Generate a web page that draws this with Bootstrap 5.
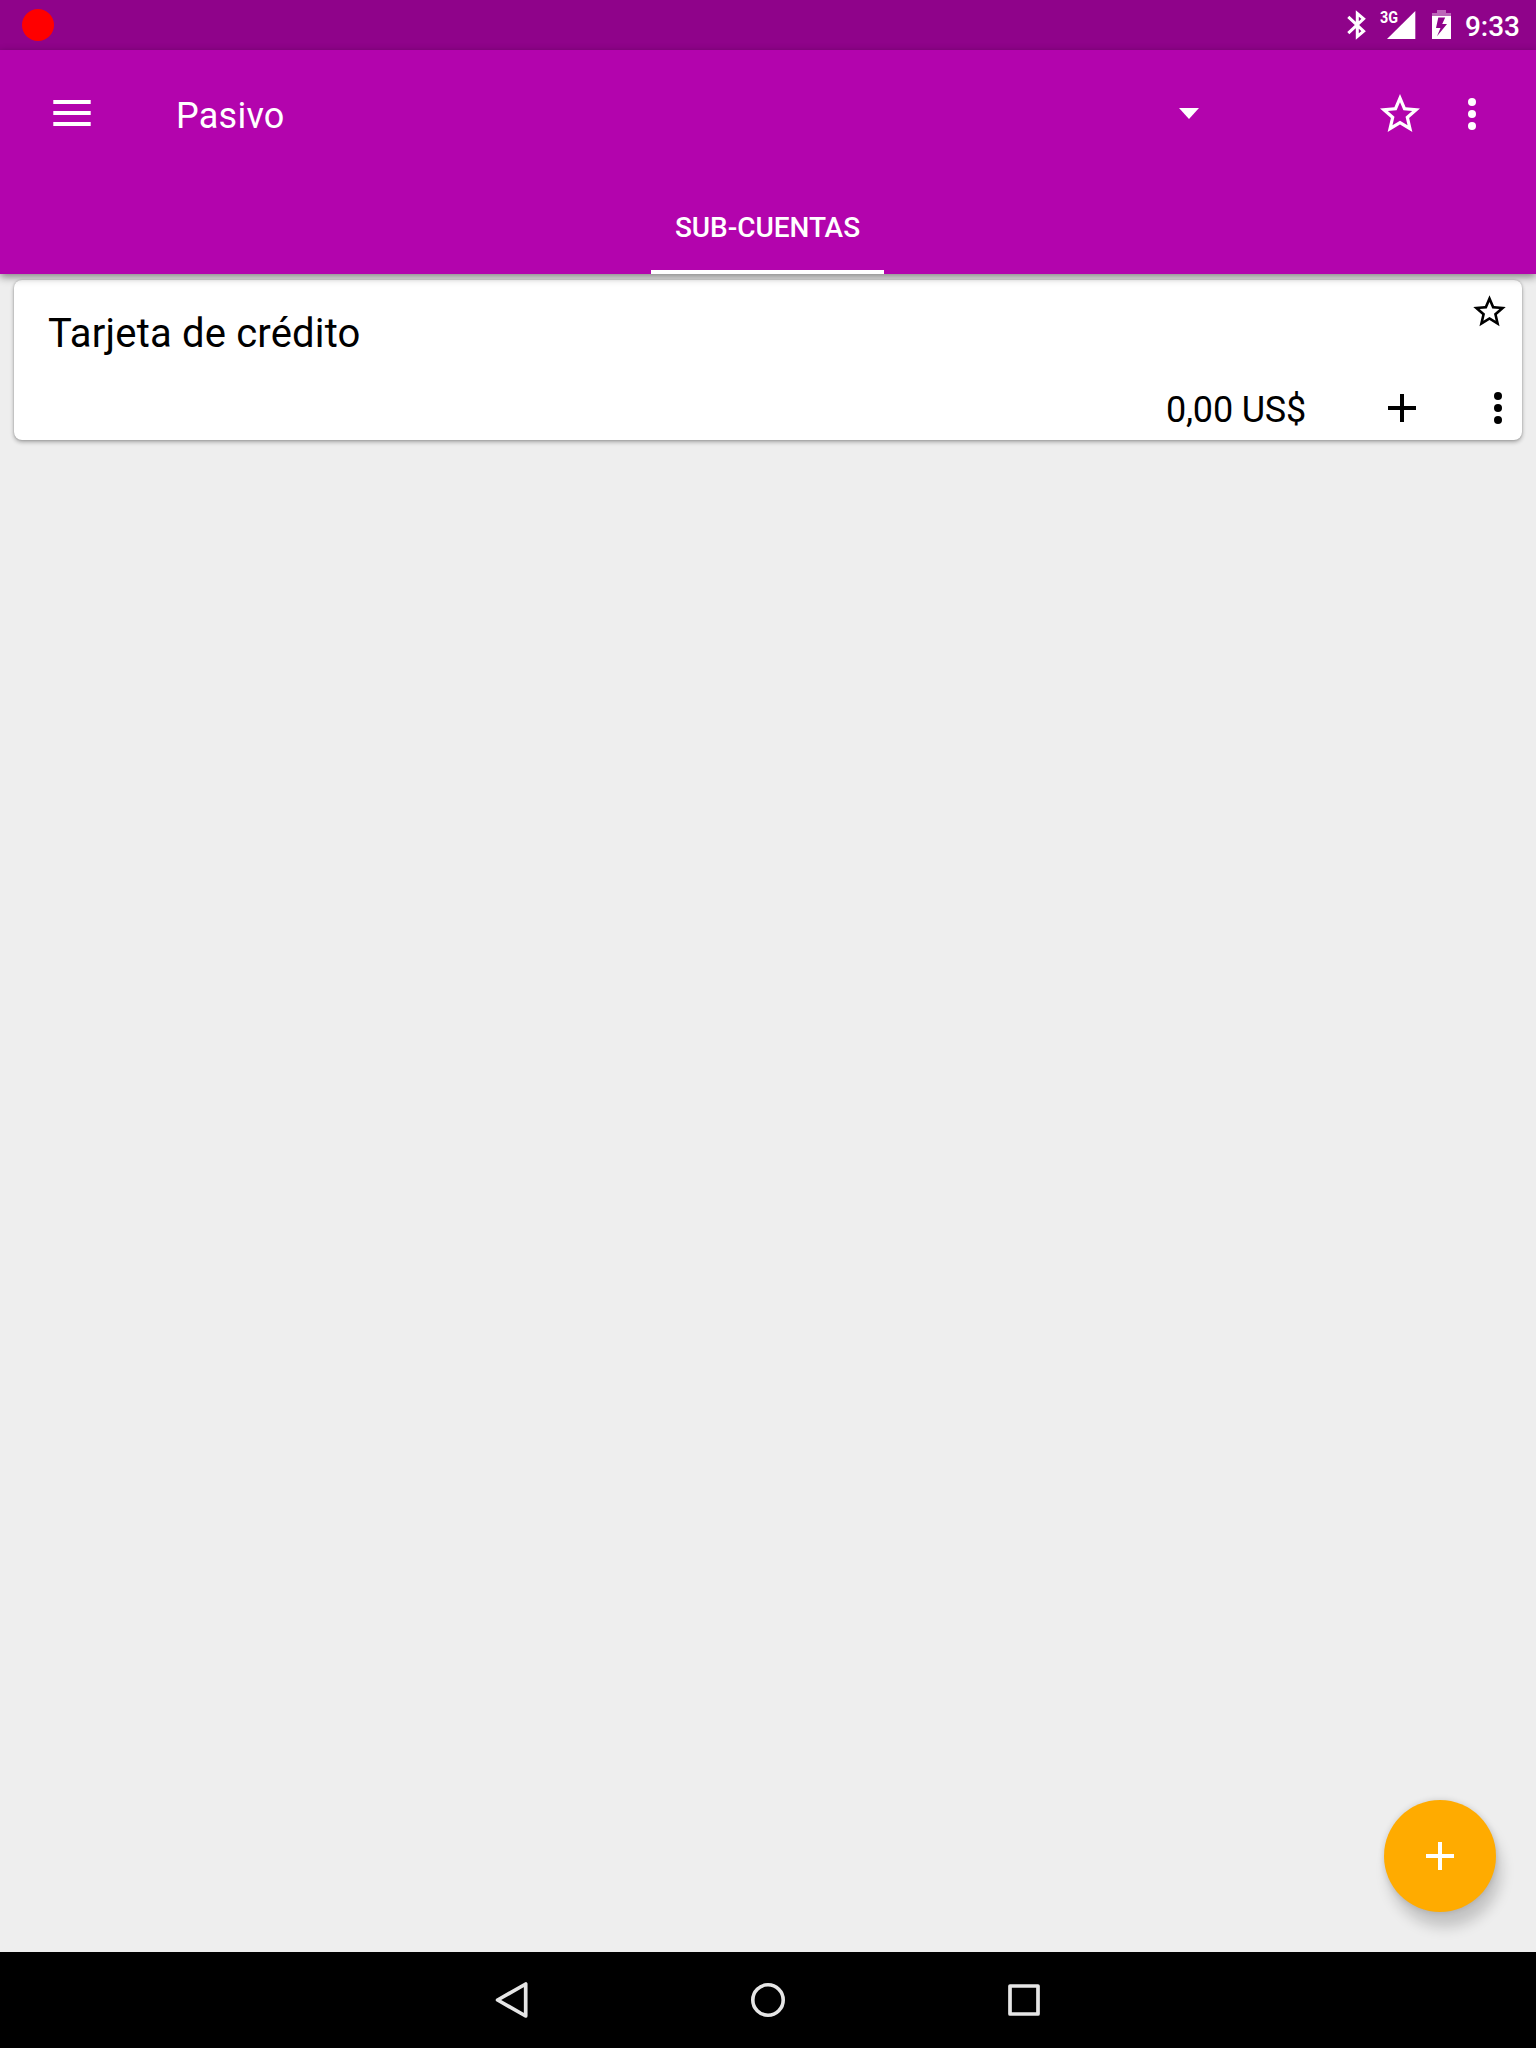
<!DOCTYPE html>
<html lang="es">
<head>
<meta charset="utf-8">
<meta name="viewport" content="width=device-width, initial-scale=1">
<title>Pasivo</title>
<link href="https://cdn.jsdelivr.net/npm/bootstrap@5.3.0/dist/css/bootstrap.min.css" rel="stylesheet">
<style>
  body { font-family: Roboto, sans-serif; background: #eee; color: #000; overflow: hidden; }
  svg { display: block; flex: none; }
  .btn-icon { --bs-btn-padding-x: 0; --bs-btn-padding-y: 0; --bs-btn-border-width: 0; line-height: 0; color: inherit; border-radius: 0; flex: none; }
  .status-bar { height: 50px; background: #8f038a; padding-left: 22px; padding-right: 16px; }
  .record-dot { width: 32px; height: 32px; background: #f00; }
  .network { margin-left: 20px; }
  .network-label { font-size: 16px; line-height: 1; font-weight: 700; left: -7px; top: -1px; transform: scaleX(.9); transform-origin: left; }
  .battery { margin-left: 16px; margin-bottom: 1px; }
  .clock { font-size: 28px; line-height: 50px; font-weight: 500; margin-left: 14px; padding-top: 3px; }
  .app-bar { height: 224px; background: #b304ad; box-shadow: 0 3px 8px rgba(0,0,0,.45); z-index: 2; }
  .tool-row { height: 128px; padding-left: 48px; padding-right: 40px; }
  .app-title { font-size: 36px; line-height: 44px; margin-left: 80px; padding-top: 3px; letter-spacing: .25px; }
  .btn-star { margin-left: 163px; }
  .btn-more { margin-left: 24px; }
  .tab-row { height: 96px; padding-right: 1px; }
  .tab-row .nav-link { width: 233px; height: 96px; padding: 6px 0 0; line-height: 88px; font-size: 28px; font-weight: 500; letter-spacing: -.05px; color: #fff; border-bottom: 4px solid #fff; text-align: center; }
  .account-list { padding: 6px 14px; }
  .account-card { height: 160px; border: 0; border-radius: 8px; box-shadow: 0 2px 4px rgba(0,0,0,.32), 0 0 2px rgba(0,0,0,.2); }
  .account-name { font-size: 40px; line-height: 48px; margin: 30px 0 0 34px; letter-spacing: .18px; }
  .fav { margin: 12px 13px 0 0; }
  .amount { font-size: 36px; line-height: 44px; margin-right: 72px; padding-top: 4px; letter-spacing: -.2px; }
  .card-foot { height: 64px; padding-right: 12px; }
  .card-more { margin-left: 60px; }
  .fab { width: 112px; height: 112px; background: #ffab00; right: 40px; bottom: 40px; box-shadow: 5px 15px 14px rgba(0,0,0,.18), 0 0 6px rgba(0,0,0,.14); }
  .sys-nav { height: 96px; gap: 208px; }
</style>
</head>
<body>
<div class="d-flex flex-column vh-100">
  <div class="status-bar d-flex align-items-center text-white">
    <div class="record-dot rounded-circle me-auto"></div>
    <svg width="20" height="30" viewBox="0 0 20 30" fill="none" stroke="#fff" stroke-width="3"><path d="M1.3 6.8 16.6 21.2 10.3 26.6V3.4L16.6 8.8 1.3 23.2"/></svg>
    <div class="network position-relative">
      <svg width="29" height="28" viewBox="0 0 29 28" fill="#fff"><path d="M0 28 28.3 0V28z"/></svg>
      <span class="network-label position-absolute">3G</span>
    </div>
    <svg class="battery" width="19" height="29" viewBox="0 0 19 29"><path fill="#fff" fill-opacity=".4" d="M5 0h9v3h5v3H0V3h5z"/><path fill="#fff" fill-rule="evenodd" d="M0 6h19v23H0zM6.3 7.5 4 18h4.5L5 26.2 15 14h-4.8L13.2 7.5z"/></svg>
    <div class="clock">9:33</div>
  </div>

  <header class="app-bar position-relative text-white">
    <div class="tool-row d-flex align-items-center">
      <button class="btn btn-icon" aria-label="Menú"><svg width="48" height="48" viewBox="0 0 48 48" fill="#fff"><path d="M5.3 10H42.7v4H5.3zM5.3 21H42.7v4H5.3zM5.3 32H42.7v4H5.3z"/></svg></button>
      <div class="app-title">Pasivo</div>
      <button class="btn btn-icon ms-auto" aria-label="Cuentas"><svg width="48" height="48" viewBox="0 0 48 48" fill="#fff"><path d="M14 18h20L24 29z"/></svg></button>
      <button class="btn btn-icon btn-star" aria-label="Favorito"><svg width="48" height="48" viewBox="0 0 24 24" fill="#fff"><path d="M22 9.24l-7.19-.62L12 2 9.19 8.63 2 9.24l5.46 4.73L5.82 21 12 17.27 18.18 21l-1.63-7.03L22 9.24zM12 15.4l-3.76 2.27 1-4.28-3.32-2.88 4.38-.38L12 6.1l1.71 4.04 4.38.38-3.32 2.88 1 4.28L12 15.4z"/></svg></button>
      <button class="btn btn-icon btn-more" aria-label="Más opciones"><svg width="48" height="48" viewBox="0 0 48 48" fill="#fff"><circle cx="24" cy="12" r="4"/><circle cx="24" cy="24" r="4"/><circle cx="24" cy="36" r="4"/></svg></button>
    </div>
    <nav class="tab-row nav justify-content-center"><a class="nav-link active" href="#">SUB-CUENTAS</a></nav>
  </header>

  <main class="flex-grow-1 position-relative account-list">
    <div class="card account-card">
      <div class="d-flex justify-content-between align-items-start flex-grow-1">
        <div class="account-name">Tarjeta de crédito</div>
        <button class="btn btn-icon fav" aria-label="Favorito"><svg width="39" height="39" viewBox="0 0 24 24"><path d="M22 9.24l-7.19-.62L12 2 9.19 8.63 2 9.24l5.46 4.73L5.82 21 12 17.27 18.18 21l-1.63-7.03L22 9.24zM12 15.4l-3.76 2.27 1-4.28-3.32-2.88 4.38-.38L12 6.1l1.71 4.04 4.38.38-3.32 2.88 1 4.28L12 15.4z"/></svg></button>
      </div>
      <div class="card-foot d-flex align-items-center justify-content-end">
        <div class="amount">0,00 US$</div>
        <button class="btn btn-icon" aria-label="Añadir"><svg width="48" height="48" viewBox="0 0 48 48"><path d="M22 10h4v12h12v4H26v12h-4V26H10v-4h12z"/></svg></button>
        <button class="btn btn-icon card-more" aria-label="Más opciones"><svg width="24" height="48" viewBox="0 0 24 48"><circle cx="12" cy="12" r="4"/><circle cx="12" cy="24" r="4"/><circle cx="12" cy="36" r="4"/></svg></button>
      </div>
    </div>
    <button class="fab btn btn-icon rounded-circle position-absolute d-flex align-items-center justify-content-center" aria-label="Nueva cuenta"><svg width="48" height="48" viewBox="0 0 48 48" fill="#fff"><path d="M22 10h4v12h12v4H26v12h-4V26H10v-4h12z"/></svg></button>
  </main>

  <footer class="sys-nav bg-black d-flex align-items-center justify-content-center">
    <svg width="48" height="48" viewBox="0 0 48 48" fill="none" stroke="#e6e6e6" stroke-width="3.7" stroke-linejoin="round"><path d="M37.7 8V40L9.6 24z"/></svg>
    <svg width="48" height="48" viewBox="0 0 48 48" fill="none" stroke="#e6e6e6" stroke-width="3.6"><circle cx="24" cy="24" r="15.2"/></svg>
    <svg width="48" height="48" viewBox="0 0 48 48" fill="none" stroke="#e6e6e6" stroke-width="3.7" stroke-linejoin="round"><path d="M10 10H38V38H10z"/></svg>
  </footer>
</div>
<script src="https://cdn.jsdelivr.net/npm/bootstrap@5.3.0/dist/js/bootstrap.bundle.min.js"></script>
</body>
</html>
